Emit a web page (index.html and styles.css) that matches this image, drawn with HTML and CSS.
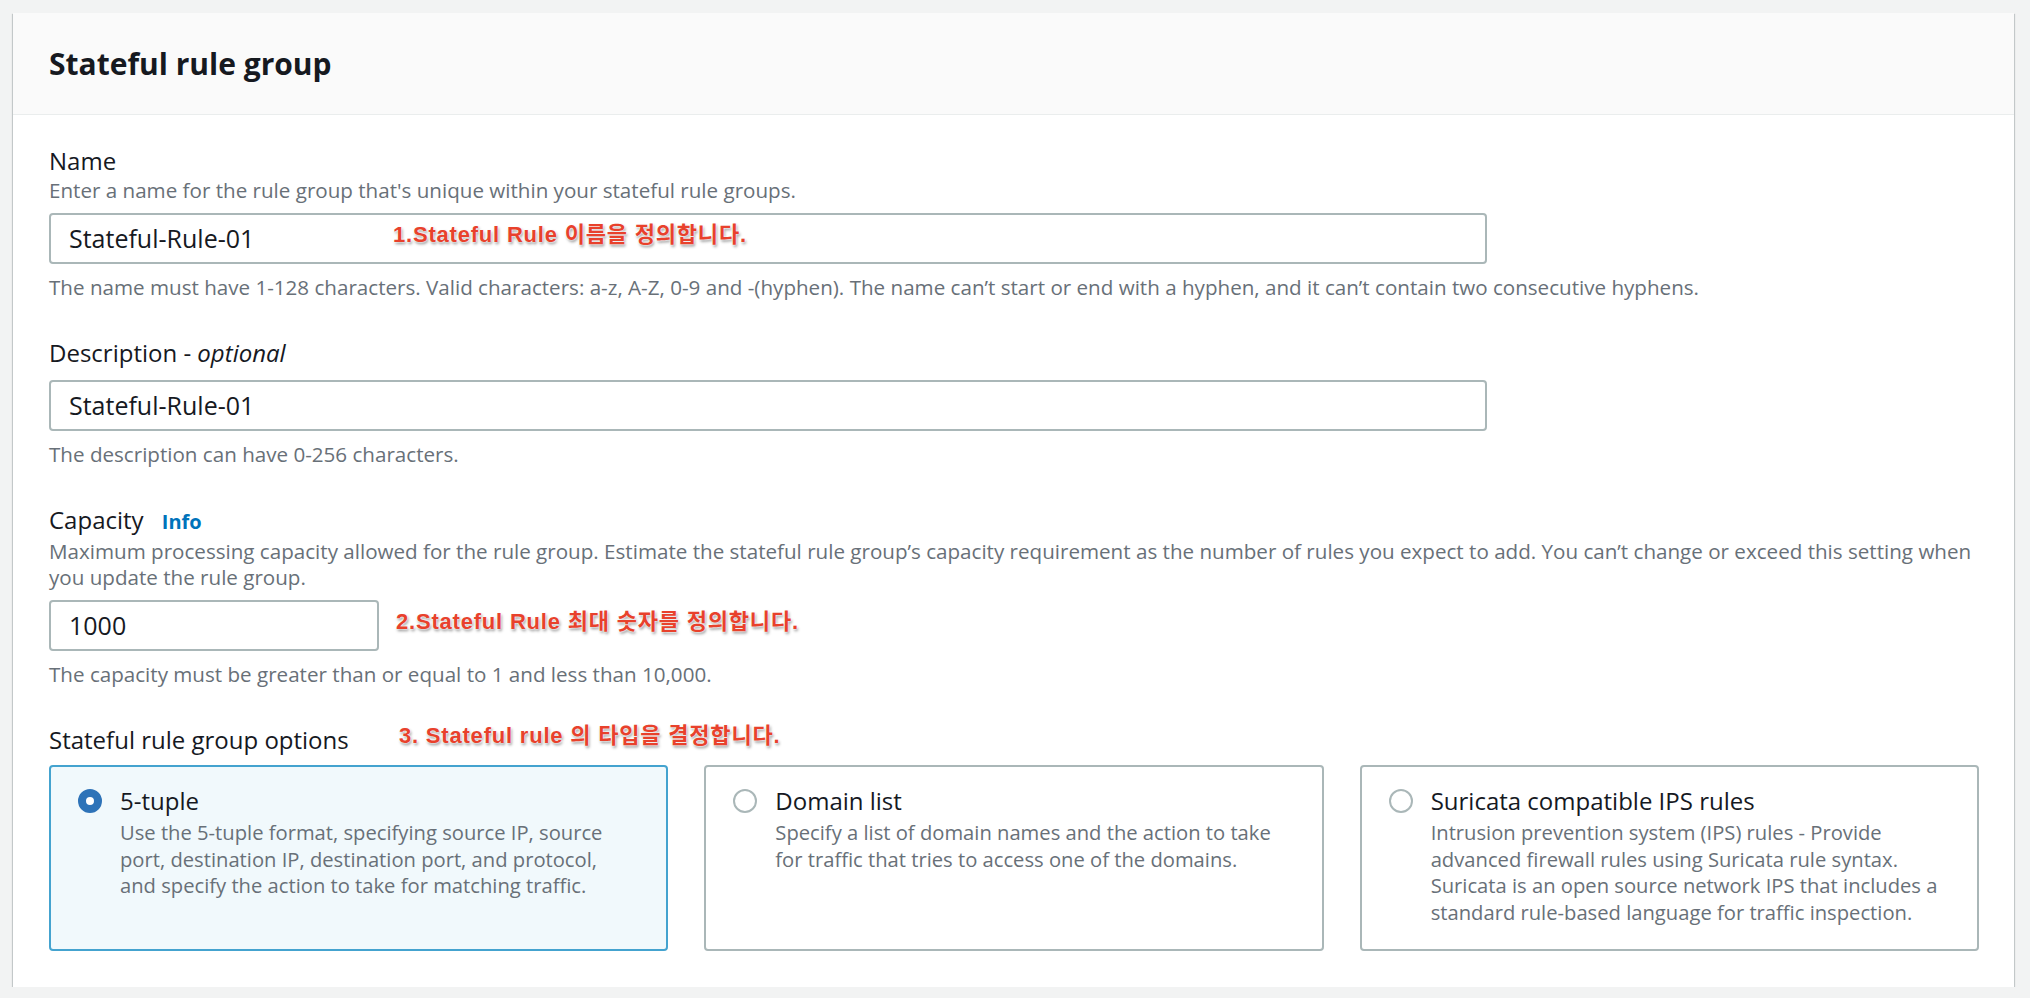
FILE: index.html
```html
<!DOCTYPE html>
<html lang="en">
<head>
<meta charset="utf-8">
<title>Stateful rule group</title>
<link rel="stylesheet" href="styles.css">
</head>
<body>
<div class="page">
  <section class="card">
    <header class="card-header">
      <h2 class="card-title">Stateful rule group</h2>
    </header>
    <div class="card-body">
      <div class="field">
        <div class="label">Name</div>
        <div class="desc">Enter a name for the rule group that's unique within your stateful rule groups.</div>
        <div class="control">
          <div class="input input-wide">Stateful-Rule-01</div>
          <span class="note note-name">1.Stateful Rule 이름을 정의합니다.</span>
        </div>
        <div class="hint">The name must have 1-128 characters. Valid characters: a-z, A-Z, 0-9 and -(hyphen). The name can’t start or end with a hyphen, and it can’t contain two consecutive hyphens.</div>
      </div>

      <div class="field">
        <div class="label">Description - <i>optional</i></div>
        <div class="control">
          <div class="input input-wide">Stateful-Rule-01</div>
        </div>
        <div class="hint">The description can have 0-256 characters.</div>
      </div>

      <div class="field">
        <div class="label">Capacity <a class="info">Info</a></div>
        <div class="desc">Maximum processing capacity allowed for the rule group. Estimate the stateful rule group’s capacity requirement as the number of rules you expect to add. You can’t change or exceed this setting when you update the rule group.</div>
        <div class="control">
          <div class="input input-small">1000</div>
          <span class="note note-capacity">2.Stateful Rule 최대 숫자를 정의합니다.</span>
        </div>
        <div class="hint">The capacity must be greater than or equal to 1 and less than 10,000.</div>
      </div>

      <div class="field field-options">
        <div class="label">Stateful rule group options
          <span class="note note-options">3. Stateful rule 의 타입을 결정합니다.</span>
        </div>
        <div class="tiles">
          <div class="tile tile-selected">
            <span class="radio radio-on"></span>
            <div class="tile-text">
              <div class="tile-title">5-tuple</div>
              <div class="tile-desc">Use the 5-tuple format, specifying source IP, source port, destination IP, destination port, and protocol, and specify the action to take for matching traffic.</div>
            </div>
          </div>
          <div class="tile">
            <span class="radio"></span>
            <div class="tile-text">
              <div class="tile-title">Domain list</div>
              <div class="tile-desc">Specify a list of domain names and the action to take for traffic that tries to access one of the domains.</div>
            </div>
          </div>
          <div class="tile">
            <span class="radio"></span>
            <div class="tile-text">
              <div class="tile-title">Suricata compatible IPS rules</div>
              <div class="tile-desc">Intrusion prevention system (IPS) rules - Provide advanced firewall rules using Suricata rule syntax. Suricata is an open source network IPS that includes a standard rule-based language for traffic inspection.</div>
            </div>
          </div>
        </div>
      </div>
    </div>
  </section>
</div>
</body>
</html>
```

FILE: styles.css
```css
html, body {
  margin: 0;
  padding: 0;
}
body {
  background: #f2f3f3;
  font-family: "Open Sans", "Noto Sans CJK KR", sans-serif;
  color: #16191f;
}
.page {
  padding: 13px 16px 0 13px;
}
.card {
  background: #ffffff;
  box-shadow: 0 1px 1px 0 rgba(0, 28, 36, 0.3), 1px 1px 1px 0 rgba(0, 28, 36, 0.15), -1px 1px 1px 0 rgba(0, 28, 36, 0.15);
}
.card-header {
  height: 102px;
  box-sizing: border-box;
  background: #fafafa;
  border-bottom: 1px solid #eaeded;
  display: flex;
  align-items: center;
  padding: 0 36px 1px;
}
.card-title {
  margin: 0;
  font-size: 30px;
  font-weight: 700;
  color: #16191f;
}
.card-body {
  padding: 29px 35px 36px 36px;
}
.field + .field {
  margin-top: 36px;
}
.label {
  font-size: 24px;
  line-height: 33px;
  color: #16191f;
  position: relative;
}
.info {
  color: #0073bb;
  font-weight: 700;
  font-size: 20px;
  margin-left: 12px;
}
.desc, .hint {
  font-size: 20.6px;
  line-height: 26px;
  color: #687078;
}
.control {
  position: relative;
  margin: 10px 0;
}
.label + .control {
  margin-top: 11px;
}
.input {
  box-sizing: border-box;
  height: 51px;
  border: 2px solid #aab7b8;
  border-radius: 4px;
  padding: 0 18px 1px;
  font-size: 25px;
  display: flex;
  align-items: center;
  color: #16191f;
  background: #ffffff;
}
.input-wide {
  width: 1438px;
}
.input-small {
  width: 330px;
}
.note {
  position: absolute;
  font-family: "Liberation Sans", "Noto Sans CJK KR", sans-serif;
  font-weight: 700;
  font-size: 22px;
  line-height: 28px;
  letter-spacing: 0.8px;
  color: #e8412c;
  white-space: nowrap;
  text-shadow: 0 0 2px #ffffff, 0 0 2px #ffffff, 1px 2px 3px rgba(0, 0, 0, 0.45);
}
.note-name {
  left: 344px;
  top: 8px;
}
.note-capacity {
  left: 347px;
  top: 8px;
}
.note-options {
  left: 350px;
  top: -1px;
}
.tiles {
  display: grid;
  grid-template-columns: repeat(3, 1fr);
  gap: 36px;
  margin-top: 9px;
}
.tile {
  box-sizing: border-box;
  height: 186px;
  border: 2px solid #aab7b8;
  border-radius: 4px;
  padding: 18px 32px 18px 27px;
  display: flex;
  gap: 18px;
  background: #ffffff;
}
.tile-selected {
  border-color: #44a3cf;
  background: #f1f9fc;
}
.radio {
  flex: none;
  box-sizing: border-box;
  width: 24px;
  height: 24px;
  margin-top: 4px;
  border-radius: 50%;
  border: 2px solid #aab7b8;
  background: #ffffff;
}
.radio-on {
  border: 8px solid #2e73b8;
}
.tile-title {
  font-size: 24px;
  line-height: 32px;
  color: #16191f;
}
.tile-desc {
  margin-top: 2px;
  font-size: 20.2px;
  line-height: 26.5px;
  color: #687078;
}
```
